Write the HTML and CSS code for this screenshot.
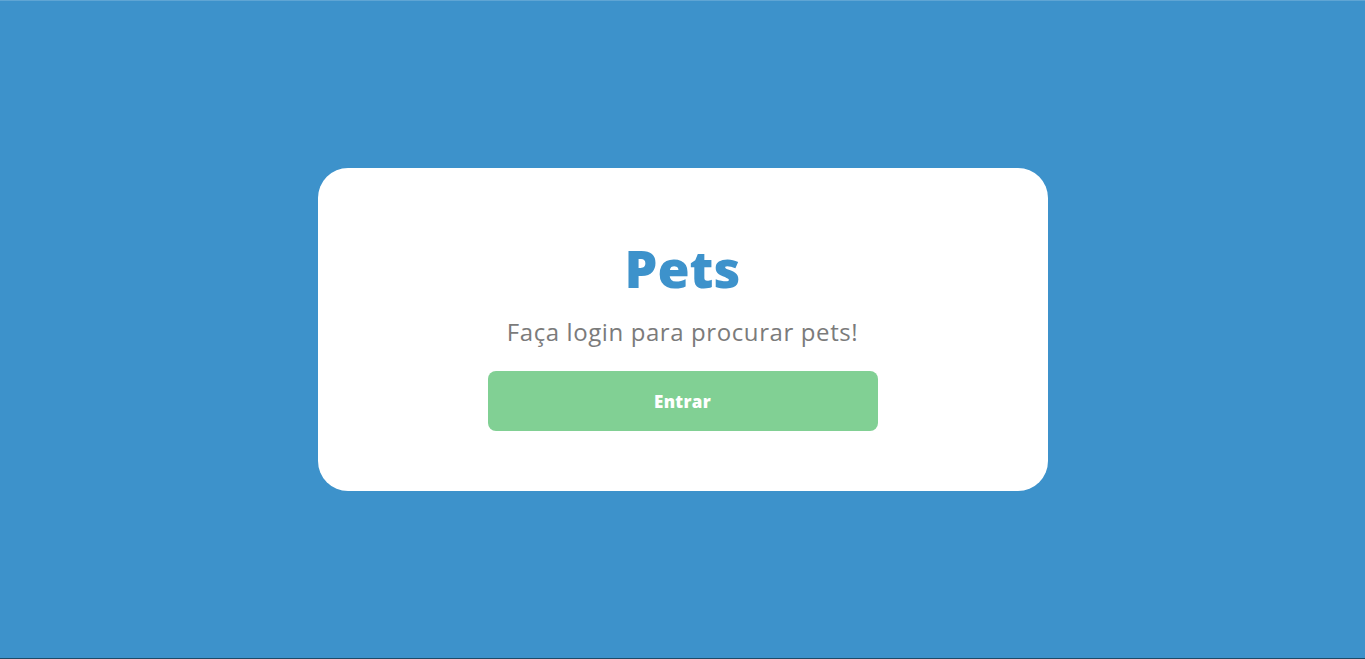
FILE: index.html
```html
<!DOCTYPE html>
<html lang="pt-BR">
<head>
<meta charset="utf-8">
<title>Pets</title>
<link rel="stylesheet" href="styles.css">
</head>
<body>
<main class="page">
  <section class="card">
    <h1 class="title">Pets</h1>
    <p class="subtitle">Faça login para procurar pets!</p>
    <button class="btn" type="button">Entrar</button>
  </section>
</main>
</body>
</html>
```

FILE: styles.css
```css
* { box-sizing: border-box; }
html, body { margin: 0; padding: 0; height: 100%; }
body {
  background: #3d92cb;
  font-family: "Open Sans", "DejaVu Sans", sans-serif;
}
.page {
  height: 659px;
  display: flex;
  align-items: center;
  justify-content: center;
  border-top: 1px solid #5fa5d4;
  border-bottom: 1px solid #1d4a66;
}
.card {
  width: 730px;
  height: 323px;
  background: #ffffff;
  border-radius: 30px;
  display: flex;
  flex-direction: column;
  align-items: center;
  padding-top: 68px;
}
.title {
  margin: 0;
  font-size: 52px;
  font-weight: 800;
  color: #3d92cb;
  line-height: 64px;
}
.subtitle {
  margin: 16px 0 0;
  font-size: 24px;
  letter-spacing: 0.6px;
  color: #7b7b7b;
  line-height: 32px;
}
.btn {
  margin-top: 23px;
  width: 390px;
  height: 60px;
  border: none;
  border-radius: 8px;
  background: #81d094;
  color: #ffffff;
  font-family: inherit;
  font-size: 17px;
  font-weight: 800;
  letter-spacing: 0.3px;
  cursor: pointer;
}
```
